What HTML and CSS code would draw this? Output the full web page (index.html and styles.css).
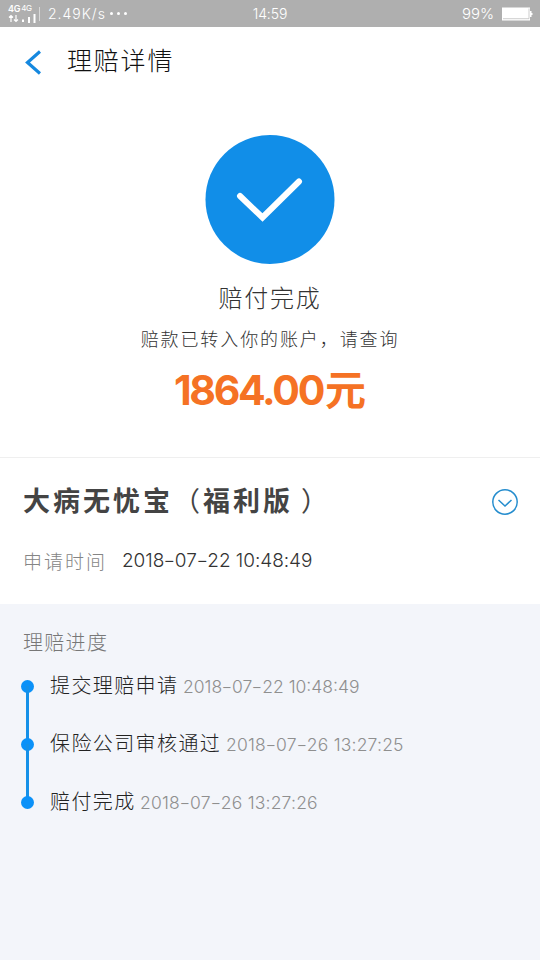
FILE: index.html
```html
<!DOCTYPE html>
<html lang="zh-CN">
<head>
<meta charset="utf-8">
<title>理赔详情</title>
<link rel="stylesheet" href="styles.css">
</head>
<body>
<div class="status">
  <div class="status-left">
    <div class="network">
      <div class="gen"><span>4G</span><span class="small">4G</span></div>
      <svg width="34" height="9" viewBox="0 0 34 9" fill="none" stroke="#fff"><path d="M3 8V1.500M1 3.500l2-2 2 2M8 1v6.500M6 5.500l2 2 2-2" stroke-width="1.200"/><path d="M15 5.500V8M21 3V9M26.500 0V9" stroke-width="2"/></svg>
    </div>
    <i class="divider"></i>
    <span class="speed">2.49K/s</span>
    <span class="dots"><i></i><i></i><i></i></span>
  </div>
  <time class="clock">14:59</time>
  <div class="status-right">
    <span class="percent">99%</span>
    <svg width="32" height="14" viewBox="0 0 32 14"><path d="M0 .5H28V4h1.500v2H30.500v2H29.500v2H28v3.500H0z" fill="#fff"/><path d="M1 11.700H27V1.500" fill="none" stroke="#b8b8b8" stroke-width=".7"/></svg>
  </div>
</div>
<header class="nav">
  <svg width="18" height="26" viewBox="0 0 18 26" fill="none" stroke="#1588df" stroke-width="3.200"><path d="M17 2.500L4.500 13.500l12.500 11"/></svg>
  <h1>理赔详情</h1>
</header>
<section class="result">
  <svg class="check" width="130" height="130" viewBox="0 0 130 130"><circle cx="65" cy="65.500" r="64.500" fill="#118ee8"/><path d="M35 62l22.500 21.500L94 47.500" fill="none" stroke="#fff" stroke-width="6" stroke-linecap="round"/></svg>
  <div class="state">赔付完成</div>
  <div class="note">赔款已转入你的账户，请查询</div>
  <div class="amount"><span>1864.00</span><span class="yuan">元</span></div>
</section>
<section class="policy">
  <div class="policy-head">
    <h2>大病无忧宝<span class="open">（</span>福利版<span class="close">）</span></h2>
    <svg width="28" height="28" viewBox="0 0 28 28" fill="none" stroke="#258dce" stroke-width="1.500"><circle cx="14" cy="14" r="12.200"/><path d="M7.500 12l6.500 6 6.500-6"/></svg>
  </div>
  <div class="apply"><span class="label">申请时间</span><time>2018<b>-</b>07<b>-</b>22 10:48:49</time></div>
</section>
<section class="progress">
  <h3>理赔进度</h3>
  <ol>
    <li><span class="step s6">提交理赔申请</span><time>2018<b>-</b>07<b>-</b>22 10:48:49</time></li>
    <li><span class="step s8">保险公司审核通过</span><time>2018<b>-</b>07<b>-</b>26 13:27:25</time></li>
    <li><span class="step s4">赔付完成</span><time>2018<b>-</b>07<b>-</b>26 13:27:26</time></li>
  </ol>
</section>
</body>
</html>
```
FILE: styles.css
```css
* { box-sizing: border-box; }
body {
  margin: 0;
  min-height: 960px;
  background: #f3f5fa;
  color: #333;
  font-family: Inter, "Noto Sans CJK SC", sans-serif;
  font-weight: 300;
}
h1, h2, h3, ol { margin: 0; padding: 0; font-weight: inherit; }
svg { display: block; flex: none; }
span, time, h1, h2, h3, .state, .note { white-space: nowrap; }

.status {
  height: 27px;
  background: #afafaf;
  color: #fff;
  display: grid;
  grid-template-columns: 1fr auto 1fr;
  align-items: center;
  padding: 0 8px;
  font-size: 14px;
  line-height: 26px;
}
.status-left { display: flex; align-items: center; }
.network { width: 31px; }
.network svg { margin-top: 1px; }
.gen { display: flex; gap: 1px; font-size: 9px; font-weight: 600; line-height: 9px; letter-spacing: -.3px; }
.gen .small { font-size: 8px; font-weight: 400; }
.divider { width: 1px; height: 14px; background: #d8d8d8; margin-right: 8px; }
.speed { letter-spacing: 1px; }
.dots { display: flex; gap: 4px; margin-left: 4px; }
.dots i { width: 3px; height: 3px; border-radius: 50%; background: #fff; }
.clock { letter-spacing: -.1px; }
.status-right { display: flex; align-items: center; justify-content: flex-end; gap: 8px; }
.percent { font-size: 15px; }
.status-right svg { margin-right: -2px; }

.nav {
  height: 70px;
  background: #fff;
  display: flex;
  align-items: flex-start;
  padding: 22px 0 0 23px;
}
.nav h1 { margin: -1px 0 0 26px; font-size: 25px; line-height: 26px; letter-spacing: 1.800px; color: #111; }

.result {
  height: 361px;
  background: #fff;
  border-bottom: 1px solid #efefef;
  display: flex;
  flex-direction: column;
  align-items: center;
  padding-top: 37px;
}
.state { margin-top: 18px; font-size: 24px; line-height: 34px; letter-spacing: 1.700px; }
.note { margin-top: 11px; font-size: 18px; line-height: 26px; letter-spacing: 1.900px; }
.amount { margin-top: 9px; display: flex; align-items: center; color: #f57224; font-size: 41px; line-height: 56px; font-weight: 700; letter-spacing: -2.300px; }
.amount .yuan { font-size: 41px; letter-spacing: 0; margin-left: 2px; }

.policy { height: 146px; background: #fff; padding: 0 21px 0 23px; }
.policy-head { height: 88px; display: flex; align-items: center; justify-content: space-between; }
.policy h2 { font-size: 27px; font-weight: 700; letter-spacing: 3px; line-height: 40px; color: #444; }
.open, .close { font-weight: 400; }
.close { margin-left: 8px; }
.apply { display: flex; align-items: center; height: 28px; font-size: 19px; color: #333; }
.label { width: 99px; font-size: 19px; letter-spacing: 2px; color: #858585; }
.apply time { letter-spacing: -.05px; }
time b { display: inline-block; font-weight: inherit; transform: scaleX(1.350); margin: 0 1px; }

.progress { padding: 24px 21px 0; }
.progress h3 { height: 30px; line-height: 30px; font-size: 20px; letter-spacing: 1.300px; color: #777; padding-left: 2px; }
.progress ol { list-style: none; padding-top: 14px; }
.progress li {
  position: relative;
  height: 58px;
  display: flex;
  line-height: 29px;
  font-size: 17.500px;
  color: #8f8f8f;
  padding-left: 29px;
}
.progress li time { letter-spacing: .2px; }
.progress li:first-child time { letter-spacing: 0; }
.progress li::before {
  content: "";
  position: absolute;
  left: 0;
  top: 8px;
  width: 13px;
  height: 13px;
  border-radius: 50%;
  background: #0b91f8;
}
.progress li:not(:last-child)::after {
  content: "";
  position: absolute;
  left: 5px;
  top: 14px;
  width: 3px;
  height: 58px;
  background: #1590e8;
}
.step { font-size: 20px; letter-spacing: 1.400px; color: #222; }
.s4 { width: 90px; }
.s6 { width: 133px; }
.s8 { width: 176px; }
```
